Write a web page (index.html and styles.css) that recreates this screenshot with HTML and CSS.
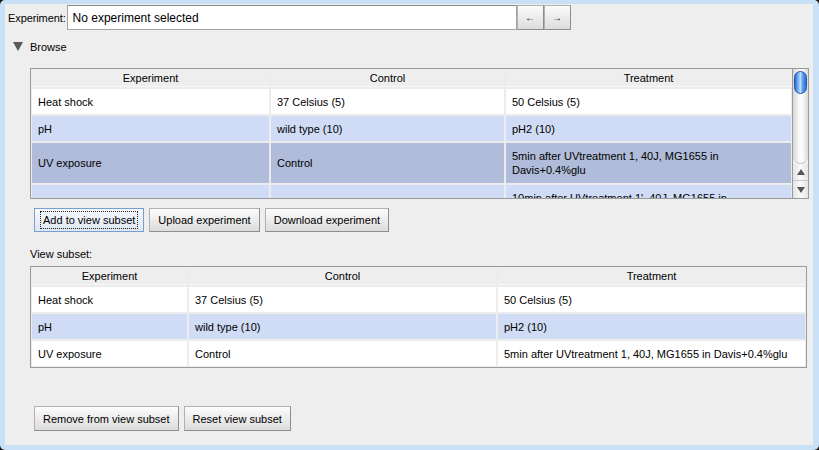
FILE: index.html
```html
<!DOCTYPE html>
<html>
<head>
<meta charset="utf-8">
<link rel="stylesheet" href="styles.css">
</head>
<body>
<div class="panel">
  <div class="toprow">
    <span class="lbl">Experiment:</span>
    <div class="field">No experiment selected</div>
    <button class="btn arrow">&#8592;</button>
    <button class="btn arrow">&#8594;</button>
  </div>
  <div class="browse">
    <span class="tri"></span>
    <span>Browse</span>
  </div>
  <div class="table t1">
    <div class="grid g1">
      <div class="hd">Experiment</div>
      <div class="hd">Control</div>
      <div class="hd">Treatment</div>

      <div class="c">Heat shock</div>
      <div class="c">37 Celsius (5)</div>
      <div class="c">50 Celsius (5)</div>

      <div class="c alt">pH</div>
      <div class="c alt">wild type (10)</div>
      <div class="c alt">pH2 (10)</div>

      <div class="c sel">UV exposure</div>
      <div class="c sel">Control</div>
      <div class="c sel">5min after UVtreatment 1, 40J, MG1655 in Davis+0.4%glu</div>

      <div class="c alt"></div>
      <div class="c alt"></div>
      <div class="c alt top">10min after UVtreatment 1', 40J, MG1655 in Davis+0.4%glu</div>
    </div>
    <div class="sb">
      <div class="track"><div class="thumb"></div></div>
      <div class="sbbtn up"><span class="up-tri"></span></div>
      <div class="sbbtn dn"><span class="dn-tri"></span></div>
    </div>
  </div>
  <div class="btnrow r1">
    <button class="btn focus"><span class="fr">Add to view subset</span></button>
    <button class="btn">Upload experiment</button>
    <button class="btn">Download experiment</button>
  </div>
  <div class="vlabel">View subset:</div>
  <div class="table t2">
    <div class="grid g2">
      <div class="hd">Experiment</div>
      <div class="hd">Control</div>
      <div class="hd">Treatment</div>

      <div class="c">Heat shock</div>
      <div class="c">37 Celsius (5)</div>
      <div class="c">50 Celsius (5)</div>

      <div class="c alt">pH</div>
      <div class="c alt">wild type (10)</div>
      <div class="c alt">pH2 (10)</div>

      <div class="c">UV exposure</div>
      <div class="c">Control</div>
      <div class="c">5min after UVtreatment 1, 40J, MG1655 in Davis+0.4%glu</div>
    </div>
  </div>
  <div class="btnrow r2">
    <button class="btn">Remove from view subset</button>
    <button class="btn">Reset view subset</button>
  </div>
</div>
</body>
</html>
```
FILE: styles.css
```css
* { box-sizing: border-box; }
html { background: #111; overflow: hidden; }
body {
  margin: 0;
  width: 819px;
  height: 450px;
  background: #c9e1f7;
  border-radius: 5px;
  padding: 4px 6px 5px 5px;
  font-family: "Liberation Sans", Arial, sans-serif;
  font-size: 11px;
  color: #000;
}
.panel {
  background: #eeeeee;
  height: 100%;
  display: flex;
  flex-direction: column;
  align-items: flex-start;
}
.toprow {
  margin-top: 1px;
  padding-left: 3px;
  display: flex;
  align-items: center;
  height: 25px;
}
.lbl { margin-right: 1px; letter-spacing: -0.1px; }
.field {
  width: 450px;
  height: 25px;
  background: #fff;
  border: 1px solid #a4a4a4;
  border-top-color: #8a8a8a;
  font-size: 12px;
  padding-left: 5px;
  display: flex;
  align-items: center;
}
.btn {
  font-family: "Liberation Sans", Arial, sans-serif;
  font-size: 11px;
  color: #000;
  height: 25px;
  padding: 0 8px;
  border: 1px solid #b0b0b0;
  border-right-color: #8e8e8e;
  border-bottom-color: #8e8e8e;
  background: linear-gradient(#fcfcfc, #dcdcdc);
  margin: 0;
  border-radius: 0;
}
.btn.arrow {
  width: 27px;
  padding: 0;
  font-size: 10px;
  line-height: 1;
}
.btn.focus {
  border-color: #7a9fd3;
  background: linear-gradient(#f7faff, #dde6f2);
  padding: 0 6px;
}
.fr {
  outline: 1px dotted #222;
  padding: 2px 2px;
}
.browse {
  margin-top: 9px;
  height: 16px;
  display: flex;
  align-items: center;
  padding-left: 8px;
}
.tri {
  width: 0;
  height: 0;
  border-left: 5px solid transparent;
  border-right: 5px solid transparent;
  border-top: 9px solid #5a5a5a;
  margin-right: 7px;
  margin-top: -2px;
}
.table {
  margin-left: 25px;
  border: 1px solid #9a9a9a;
  background: #ececec;
  display: flex;
  overflow: hidden;
}
.t1 {
  margin-top: 13px;
  width: 779px;
  height: 131px;
}
.t2 {
  margin-top: 5px;
  width: 777px;
  height: 102px;
}
.grid {
  display: grid;
  gap: 2px;
  padding: 0 1px 1px;
  align-content: start;
  overflow: hidden;
}
.g1 {
  width: 761px;
  grid-template-columns: 237px 233px 285px;
  grid-template-rows: 18px 25px 25px 40px 40px;
}
.g2 {
  width: 775px;
  grid-template-columns: 155px 307px 307px;
  grid-template-rows: 18px 25px 25px 25px;
}
.hd {
  background: #eeeeee;
  text-align: center;
  display: flex;
  align-items: center;
  justify-content: center;
  border-bottom: 1px solid #f8f8f8;
}
.c {
  background: #fff;
  display: flex;
  align-items: center;
  padding: 0 6px;
  line-height: 14px;
}
.c.top {
  align-items: flex-start;
  padding-top: 6px;
  overflow: hidden;
}
.c.alt { background: #d0dcf6; }
.c.sel { background: #b0bcd9; }
.sb {
  width: 16px;
  border-left: 1px solid #9a9a9a;
  display: flex;
  flex-direction: column;
  background: #f2f2f2;
}
.track {
  height: 95px;
  border-radius: 0 0 8px 8px;
  background: linear-gradient(to right, #d6d6d6, #fbfbfb 45%, #fdfdfd 60%, #d9d9d9);
  border-bottom: 1px solid #c4c4c4;
  padding: 2px 1px 0 1px;
}
.thumb {
  height: 23px;
  border-radius: 7px;
  border: 1px solid #1f56b0;
  background: linear-gradient(to right, #2a6ad4, #8cc2f7 35%, #b8dcfc 50%, #5a9ce8 70%, #2f6fd6);
}
.sbbtn {
  height: 17px;
  display: flex;
  align-items: center;
  justify-content: center;
  background: linear-gradient(to right, #e4e4e4, #fafafa 50%, #e4e4e4);
}
.sbbtn.up { border-bottom: 1px solid #c8c8c8; }
.up-tri {
  width: 0; height: 0;
  border-left: 4px solid transparent;
  border-right: 4px solid transparent;
  border-bottom: 6px solid #555;
}
.dn-tri {
  width: 0; height: 0;
  border-left: 4px solid transparent;
  border-right: 4px solid transparent;
  border-top: 6px solid #555;
}
.btnrow {
  display: flex;
  gap: 5px;
  margin-left: 29px;
}
.r1 { margin-top: 9px; }
.r1 .btn { height: 24px; }
.r2 { margin-top: 38px; }
.vlabel {
  margin-top: 15px;
  margin-left: 25px;
  height: 14px;
  line-height: 14px;
}
```
